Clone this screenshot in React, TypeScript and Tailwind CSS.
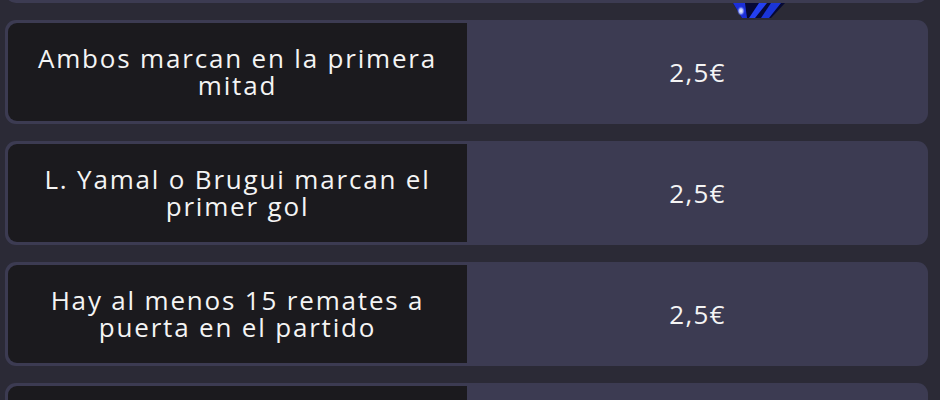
import React from 'react';

interface Bet {
  label: string;
  price: string;
}

const bets: Bet[] = [
  { label: 'Ambos marcan en la primera mitad', price: '2,5€' },
  { label: 'L. Yamal o Brugui marcan el primer gol', price: '2,5€' },
  { label: 'Hay al menos 15 remates a puerta en el partido', price: '2,5€' },
];

function BetRow({ bet }: { bet?: Bet }) {
  return (
    <div className="flex h-[104px] shrink-0 rounded-[11px] bg-[#3c3b52] py-[3px] pl-[3px]">
      {/* Bet description */}
      <div className="flex w-[459px] shrink-0 items-center justify-center rounded-l-[9px] bg-[#1b1a1e] px-[16px] text-center">
        {bet && (
          <span className="text-[26px] leading-[27px] tracking-[0.07em] text-[#f4f4f4]">{bet.label}</span>
        )}
      </div>
      {/* Price */}
      <div className="flex flex-1 items-center justify-center">
        {bet && <span className="text-[26px] leading-[27px] tracking-[0.05em] text-[#f4f4f4]">{bet.price}</span>}
      </div>
    </div>
  );
}

export default function App() {
  return (
    <div
      className="relative h-[400px] w-[940px] overflow-hidden bg-[#2b2a36]"
      style={{ fontFamily: '"Open Sans", "Noto Sans", sans-serif' }}
    >
      <div className="flex flex-col gap-[17px] pl-[5px] pr-[12px]">
        {/* Previous block, cut off at the top */}
        <div className="-mt-[101px] h-[104px] shrink-0 rounded-[11px] bg-[#3c3b52] p-[3px]">
          <div className="h-full rounded-[9px] bg-[#1c1b21]" />
        </div>
        {bets.map((bet, i) => (
          <BetRow key={i} bet={bet} />
        ))}
        {/* Next row, only its top edge is in view */}
        <BetRow />
      </div>

      {/* Decorative streak peeking from the block above */}
      <svg className="absolute left-[731px] top-[3px]" width="56" height="16" viewBox="0 0 56 16">
        <defs>
          <radialGradient id="glow" cx="0.5" cy="0.5" r="0.5">
            <stop offset="0" stopColor="#ffffff" />
            <stop offset="0.5" stopColor="#c8d4ff" stopOpacity="0.8" />
            <stop offset="1" stopColor="#3b50ff" stopOpacity="0" />
          </radialGradient>
        </defs>
        <polygon points="2,0 54,0 40,15 11,15" fill="#060935" />
        <polygon points="2,0 14,0 16,15 11,15" fill="#1b2fd8" />
        <polygon points="28,0 36,0 24,15 18,15" fill="#2440f0" />
        <polygon points="40,0 50,0 38,15 30,15" fill="#1a35d8" />
        <ellipse cx="10" cy="8" rx="4" ry="5" fill="url(#glow)" />
      </svg>
    </div>
  );
}
